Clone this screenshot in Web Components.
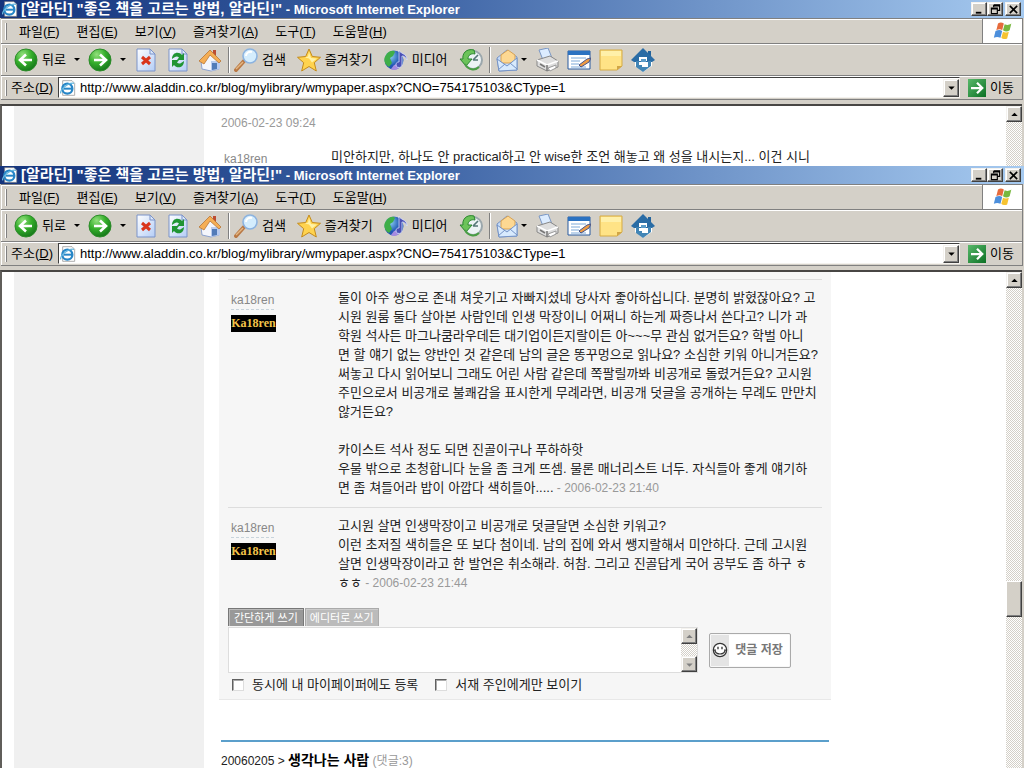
<!DOCTYPE html>
<html lang="ko">
<head>
<meta charset="utf-8">
<title>[알라딘] "좋은 책을 고르는 방법, 알라딘!"</title>
<style>
  body {
    margin: 0;
    height: 100vh;
    display: flex;
    flex-direction: column;
    overflow: hidden;
    background: #d4d0c8;
    color: #222;
    font: 13px/19px "Liberation Sans", "Noto Sans CJK KR", sans-serif;
  }
  ie-window.back { flex: none; --pane-height: 60px; }
  ie-window.front { flex: 1; min-height: 0; }
  .date { display: block; color: #999; font-size: 12px; padding: 8px 2px 5px; }
  .plain { margin-left: 2px; }
  .card {
    background: #f6f6f6;
    border-bottom: 1px solid #e8e8e8;
    padding: 7px 9px 5px;
  }
  .next {
    margin: 40px 2px 0;
    border-top: 2px solid #5b9fcb;
    padding-top: 11px;
    font-size: 12px;
    line-height: 14px;
    white-space: nowrap;
  }
  .next a { color: #000; font-size: 14px; font-weight: bold; text-decoration: none; }
  .next small { color: #999; font-size: 12px; }
</style>
</head>
<body>
  <ie-window class="back">
    <span class="date">2006-02-23 09:24</span>
    <blog-comment class="plain" author="ka18ren" brief>미안하지만, 하나도 안 practical하고 안 wise한 조언 해놓고 왜 성을 내시는지... 이건 시니</blog-comment>
  </ie-window>

  <ie-window class="front" thumb>
    <div class="card">
      <blog-comment author="ka18ren" date="2006-02-23 21:40">둘이 아주 쌍으로 존내 쳐웃기고 자빠지셨네 당사자 좋아하십니다. 분명히 밝혔잖아요? 고<br>시원 원룸 둘다 살아본 사람인데 인생 막장이니 어쩌니 하는게 짜증나서 쓴다고? 니가 과<br>학원 석사든 마그나쿰라우데든 대기업이든지랄이든 아~~~무 관심 없거든요? 학벌 아니<br>면 할 얘기 없는 양반인 것 같은데 남의 글은 똥꾸멍으로 읽나요? 소심한 키워 아니거든요?<br>써놓고 다시 읽어보니 그래도 어린 사람 같은데 쪽팔릴까봐 비공개로 돌렸거든요? 고시원<br>주민으로서 비공개로 불쾌감을 표시한게 무례라면, 비공개 덧글을 공개하는 무례도 만만치<br>않거든요?<br><br>카이스트 석사 정도 되면 진골이구나 푸하하핫<br>우물 밖으로 초청합니다 눈을 좀 크게 뜨셈. 물론 매너리스트 너두. 자식들아 좋게 얘기하<br>면 좀 쳐들어라 밥이 아깝다 색히들아.....</blog-comment>
      <blog-comment author="ka18ren" date="2006-02-23 21:44">고시원 살면 인생막장이고 비공개로 덧글달면 소심한 키워고?<br>이런 초저질 색히들은 또 보다 첨이네. 남의 집에 와서 쌩지랄해서 미안하다. 근데 고시원<br>살면 인생막장이라고 한 발언은 취소해라. 허참. 그리고 진골답게 국어 공부도 좀 하구 ㅎ<br>ㅎㅎ</blog-comment>
      <comment-form></comment-form>
    </div>
    <div class="next">20060205 &gt; <a href="#">생각나는 사람</a> <small>(댓글:3)</small></div>
  </ie-window>

<script>
const define = (name, html, init) => {
  const template = document.createElement("template");
  template.innerHTML = html;
  customElements.define(name, class extends HTMLElement {
    constructor() {
      super();
      this.attachShadow({ mode: "open" });
      this.shadowRoot.appendChild(template.content.cloneNode(true));
    }
    connectedCallback() {
      if (init) init(this, this.shadowRoot);
    }
  });
};

// all icons share a 24x24 box
const sheet = `<defs>
  <linearGradient id="p" x2="1" y2="1"><stop stop-color="#fff"/><stop offset="1" stop-color="#b4cdf6"/></linearGradient></defs>
  <path d="M3 1h13l5 5v17H3z" fill="url(#p)" stroke="#7b93c9"/><path d="M16 1v5h5z" fill="#dce8fb" stroke="#7b93c9"/>`;
const green = `<defs><radialGradient id="g" cx=".35" cy=".25" r=".8"><stop stop-color="#92e07c"/>
  <stop offset=".5" stop-color="#35ae2b"/><stop offset="1" stop-color="#14751a"/></radialGradient></defs>
  <circle cx="12" cy="12" r="11" fill="url(#g)" stroke="#2d8c2a"/>`;
const icons = {
  back: green + `<path d="M18 12H7M12 6.500l-6 5.500 6 5.500" fill="none" stroke="#fff" stroke-width="2.600"/>`,
  forward: green + `<path d="M6 12h11M12 6.500l6 5.500-6 5.500" fill="none" stroke="#fff" stroke-width="2.600"/>`,
  stop: sheet + `<path d="M8 9l8 7M16 9l-8 7" stroke="#d9351c" stroke-width="3"/>`,
  refresh: sheet + `<path d="M6 11c0-7 7-8 10-4l2-2v7h-7l2-2.500c-2-2-4-1-7 1.500zM18 13c0 7-7 8-10 4l-2 2v-7h7l-2 2.500c2 2 4 1 7-1.500z" fill="#209534"/>`,
  home: `<path d="M15 2h3v6h-3z" fill="#bd4c32"/><path d="M3 13l9-9 9 9v8l-8 2-9-2z" fill="#f4f6fc" stroke="#8da3cf"/>
    <path d="M13 13l9 0v8l-9 2z" fill="#b9cbee"/><path d="M14 15h5v6l-5 1z" fill="#527bb8"/>
    <path d="M1 13L12 2l11 11-2 2-9-8-6 9z" fill="#f5ae55" stroke="#b77637" stroke-width=".8"/>`,
  search: `<path d="M10 13l-8 9" stroke="#b97844" stroke-width="4" stroke-linecap="round"/><path d="M9 14l-7 7" stroke="#e4b784" stroke-width="1.500"/>
    <circle cx="16" cy="8" r="7" fill="#d4edfd" stroke="#8cb3df" stroke-width="1.600"/><path d="M12 8c0-3 3-5 6-4" fill="none" stroke="#fff" stroke-width="2"/>`,
  star: `<path d="M12 1l3.300 7.500 8.200.8-6.200 5.400 2 8.300-7.300-4.500L4.700 23l2-8.300L.5 9.300l8.200-.8z" fill="#ffd34e" stroke="#c48b1c"/>
    <path d="M12 4l2 6 6 .6-5 4-3-4-4-1 3-1z" fill="#fff2a6"/>`,
  media: `<defs><radialGradient id="m" cx=".3" cy=".3"><stop stop-color="#8fd6f5"/><stop offset="1" stop-color="#2056b3"/></radialGradient></defs>
    <circle cx="10" cy="12" r="9.500" fill="url(#m)"/><path d="M2 7c3-5 8-5 9-3l-2 4-3 2 2 5-3 4C0 16-1 11 2 7z" fill="#3fae48"/>
    <path d="M10 17c3-2 6 0 6 1-1 4-7 5-9 3z" fill="#a58be0"/>
    <path d="M15 2c1 4 8 3 8 10-2-4-4-4-5-4v8c0 5-6 4-6 1s2-3 3-3z" fill="#4a50b5" stroke="#dbe3ff" stroke-width=".8"/>`,
  history: `<circle cx="14" cy="12" r="9" fill="#edf3f5" stroke="#9ba7ac" stroke-width="2"/><path d="M14 12l5-5M14 12h5" stroke="#577" stroke-width="1.600"/>
    <path d="M15 2C7 0 3 6 4 11H1l6 7 6-7H9c0-4 3-6 7-5z" fill="#6cc35a" stroke="#2b8530"/><path d="M6 16c3 6 10 7 14 3" fill="none" stroke="#4a9e45" stroke-width="2"/>`,
  mail: `<path d="M2 10l10-8 10 7v13L4 23z" fill="#c5dcf8" stroke="#7593c6"/><path d="M6 7l7-5 7 5v8H6z" fill="#fdd892" stroke="#d9a354"/>
    <path d="M2 11l10 7 10-8v12L4 23z" fill="#d8eafd" stroke="#7593c6"/><path d="M3 22l7-6M22 21l-7-6" stroke="#7593c6"/>`,
  print: `<path d="M4 2l9-2 4 10-9 2z" fill="#dcecff" stroke="#7a97c5"/><path d="M2 12l13-4 8 5v6l-11 4-10-5z" fill="#dedede" stroke="#888"/>
    <path d="M2 12l10 5 11-4" fill="none" stroke="#fff" stroke-width="1.500"/><path d="M12 17v6M5 16l5 3" stroke="#777" stroke-width="1.500"/><path d="M13 20l8-3v3l-6 3z" fill="#fff" stroke="#999"/>`,
  edit: `<path d="M1 3h22v18H1z" fill="#fff" stroke="#285b9f"/><path d="M1 3h22v4H1z" fill="#2b72c1"/>
    <path d="M4 10h15M4 13h9M4 16h8M4 19h15" stroke="#7ca9d8"/><path d="M12 17l8-6 4-1-2 4-8 5z" fill="#ee9b43" stroke="#46548a"/>`,
  note: `<path d="M1 2h22v16l-5 4H1z" fill="#ffe386" stroke="#d4aa44"/><path d="M18 22v-4h5z" fill="#d1a545"/><path d="M2 3h20v5H2z" fill="#fff0a9"/>`,
  house: `<path d="M4 11v7l8 6 9-6v-7z" fill="#fff"/><path d="M17 3h3v6h-3z" fill="#23639c"/><path d="M0 12L12 0l12 12-3 2H3z" fill="#2a6ca5"/>
    <path d="M8 9h8v4H8z" fill="#fff"/><path d="M5 13h3v4h3v2h6v-6h3v5l-8 6-7-5z" fill="#4285b5"/><path d="M10 11h5v3h-5z" fill="#5c9cc9"/>`,
  page: `<path d="M4 1h14l4 4v18H4z" fill="#fff" stroke="#888"/><circle cx="11" cy="13" r="7.500" fill="none" stroke="#2786c7" stroke-width="3.500"/>
    <path d="M6 13h12" stroke="#2786c7" stroke-width="3"/><path d="M1 20C0 15 12 3 21 5" fill="none" stroke="#65b7df" stroke-width="2"/>`,
  go: `<defs><linearGradient id="o" x2="1" y2="1"><stop stop-color="#59b96b"/><stop offset="1" stop-color="#0c7024"/></linearGradient></defs>
    <path d="M0 0h24v24H0z" fill="url(#o)"/><path d="M4 12h14M12 5l7 7-7 7" fill="none" stroke="#fff" stroke-width="3"/>`,
  flag: `<path d="M6 3c3-2 5-1 7 0l-2 8c-2-2-5-1-7 0z" fill="#e66b3c"/><path d="M14 4c3 1 5 1 8-1l-2 8c-3 2-5 2-8 0z" fill="#78b83e"/>
    <path d="M3 12c3-1 5-2 8 0l-2 8c-3-1-5-1-8 0z" fill="#4c8fdc"/><path d="M12 13c2 1 5 1 7 0l-2 8c-2 1-5 1-7-1z" fill="#f6c331"/>`,
  smile: `<circle cx="12" cy="12" r="10" fill="#fff" stroke="#333" stroke-width="1.800"/><path d="M9 7v4M15 7v4" stroke="#333" stroke-width="2"/>
    <path d="M4 12c2 8 14 8 16 0M3 12h3M18 12h3" fill="none" stroke="#333" stroke-width="1.600"/>`,
  min: `<path d="M4 17h12v4H4z"/>`,
  restore: `<path d="M8 2h13v12h-5M8 7V2M8 4h13" fill="none" stroke="#000" stroke-width="2.500"/><path d="M3 9h13v12H3zM3 11h13" fill="none" stroke="#000" stroke-width="2.500"/>`,
  close: `<path d="M4 4l16 16M20 4L4 20" stroke="#000" stroke-width="3.500"/>`,
  up: `<path d="M12 8l7 7H5z"/>`,
  down: `<path d="M12 17l7-7H5z"/>`,
};

define("x-icon", `
  <style>
    :host { display: block; flex: none; width: var(--size, 24px); height: var(--size, 24px); }
    svg { display: block; width: 100%; height: 100%; }
  </style>
  <svg viewBox="0 0 24 24" fill="currentColor" aria-hidden="true"></svg>
`, (el, root) => {
  root.querySelector("svg").innerHTML = icons[el.getAttribute("name")];
});

const addIcon = (button, name) => {
  const icon = document.createElement("x-icon");
  icon.setAttribute("name", name);
  button.prepend(icon);
};

// raised grey button with a small glyph
define("bevel-button", `
  <style>
    :host { display: block; flex: none; width: 16px; height: 16px; }
    button {
      box-sizing: border-box; width: 100%; height: 100%; padding: 0;
      display: grid; place-items: center;
      background: #d4d0c8; color: inherit;
      border: 1px solid; border-color: #f4f2ee #404040 #404040 #f4f2ee;
      box-shadow: inset -1px -1px #808080, inset 1px 1px #fff;
    }
    x-icon { --size: 11px; }
  </style>
  <button type="button"></button>
`, (el, root) => {
  addIcon(root.querySelector("button"), el.getAttribute("icon"));
  root.querySelector("button").setAttribute("aria-label", el.getAttribute("icon"));
});

define("scroll-bar", `
  <style>
    :host {
      display: flex; flex-direction: column; flex: none; width: 16px; color: #000;
      background: repeating-conic-gradient(#fff 0 25%, #d4d0c8 0 50%) 0 0 / 2px 2px;
    }
    .before { flex: 66; }
    .after { flex: 34; }
    .thumb {
      display: none; height: 34px; background: #d4d0c8;
      border: 1px solid; border-color: #fff #404040 #404040 #fff;
      box-shadow: inset -1px -1px #808080;
    }
    :host([thumb]) .thumb { display: block; }
    .end { display: none; }
    :host([small]) { color: #808080; }
    :host([small]) .end { display: block; }
  </style>
  <bevel-button icon="up"></bevel-button>
  <div class="before"></div>
  <div class="thumb"></div>
  <div class="after"></div>
  <bevel-button class="end" icon="down"></bevel-button>
`);

define("tool-button", `
  <style>
    :host { display: block; flex: none; }
    button {
      display: flex; align-items: center; padding: 0;
      border: 0; background: none; color: #000; font: inherit; white-space: nowrap;
    }
    button.labelled { gap: 4px; }
    slot { display: block; }
  </style>
  <button type="button"><slot></slot></button>
`, (el, root) => {
  const button = root.querySelector("button");
  addIcon(button, el.getAttribute("icon"));
  button.classList.toggle("labelled", !!el.textContent);
  button.setAttribute("aria-label", el.textContent || el.getAttribute("icon"));
});

define("ie-window", `
  <style>
    :host { display: flex; flex-direction: column; overflow: hidden; background: #d4d0c8; color: #000; }
    header {
      display: flex; align-items: center; flex: none; height: 18px; padding: 0 3px 0 2px;
      background: linear-gradient(90deg, #14347c, #3c62a4 40%, #a6caf0);
      color: #fff; font-weight: bold; line-height: 18px; white-space: nowrap;
    }
    header x-icon { --size: 16px; margin-right: 3px; }
    header .ko { font-size: 15px; }
    header h1 { flex: 1; margin: 0; font-size: 13px; line-height: 18px; }
    header bevel-button { height: 14px; color: #000; }
    header bevel-button:last-child { margin-left: 2px; }
    .bar {
      display: flex; align-items: center; flex: none; box-sizing: border-box;
      margin: 0 1px; padding-left: 4px; color: #000; white-space: nowrap;
      border-top: 1px solid #808080; border-right: 1px solid #808080;
      box-shadow: inset 0 1px #fff, inset 1px 0 #fff;
    }
    .bar::before {
      content: ""; align-self: stretch; flex: none; width: 1px; margin: 4px 0 3px;
      border-right: 1px solid #808080; background: #fff;
    }
    .menu { height: 25px; gap: 17px; }
    .menu::before { margin-right: -5px; }
    .menu a { color: inherit; text-decoration: none; }
    .menu .logo {
      margin-left: auto; align-self: stretch; width: 39px; display: grid; place-items: center;
      border-left: 1px solid #808080; background: #fff;
    }
    .logo x-icon { --size: 20px; }
    .tools { height: 32px; }
    .group { display: flex; align-items: center; gap: 8px; }
    .tools::before { margin-right: 7px; }
    .wide { gap: 11px; }
    .caret { width: 0; border: 3px solid transparent; border-top-color: #000; border-bottom: 0; }
    .tools hr { width: 1px; height: 26px; margin: 0 4px 0 6px; border: 0; border-left: 1px solid #808080; background: #fff; }
    .mail { display: flex; align-items: center; gap: 2px; }
    .address { height: 25px; border-bottom: 1px solid #808080; }
    .address label { margin: 0 5px 0 4px; }
    .field {
      display: flex; align-items: center; flex: 1; box-sizing: border-box; height: 21px; padding-left: 1px;
      background: #fff; border: 1px solid; border-color: #404040 #f4f2ee #f4f2ee #404040;
    }
    .field x-icon { --size: 16px; }
    .field input { flex: 1; min-width: 0; padding: 0 4px; border: 0; background: none; color: #000; font: inherit; outline: 0; }
    .field bevel-button { height: 18px; }
    .address tool-button { --size: 18px; margin: 0 8px; }
    .pane {
      display: flex; flex: 1; min-height: 0; margin: 4px 2px 0 0;
      height: var(--pane-height, auto);
      border-top: 2px solid #484644; border-left: 2px solid #605e5a;
      background: #fff; color: #222; overflow: hidden;
    }
    :host(.back) .pane { flex: none; }
    aside { flex: none; width: 190px; margin: 0 15px 0 12px; background: #f0f0f0; }
    main { flex: 1; }
    .inner { width: 612px; }
  </style>
  <header>
    <x-icon name="page"></x-icon>
    <h1><span class="ko">[알라딘] "좋은 책을 고르는 방법, 알라딘!"</span> - Microsoft Internet Explorer</h1>
    <bevel-button icon="min"></bevel-button>
    <bevel-button icon="restore"></bevel-button>
    <bevel-button icon="close"></bevel-button>
  </header>
  <nav class="bar menu">
    <a href="#">파일(<u>F</u>)</a><a href="#">편집(<u>E</u>)</a><a href="#">보기(<u>V</u>)</a>
    <a href="#">즐겨찾기(<u>A</u>)</a><a href="#">도구(<u>T</u>)</a><a href="#">도움말(<u>H</u>)</a>
    <div class="logo"><x-icon name="flag"></x-icon></div>
  </nav>
  <div class="bar tools">
    <div class="group">
      <tool-button icon="back">뒤로</tool-button>
      <i class="caret"></i>
      <tool-button icon="forward"></tool-button>
      <i class="caret"></i>
      <tool-button icon="stop"></tool-button>
      <tool-button icon="refresh"></tool-button>
      <tool-button icon="home"></tool-button>
    </div>
    <hr>
    <div class="group wide">
      <tool-button icon="search">검색</tool-button>
      <tool-button icon="star">즐겨찾기</tool-button>
      <tool-button icon="media">미디어</tool-button>
      <tool-button icon="history"></tool-button>
    </div>
    <hr>
    <div class="group">
      <div class="mail"><tool-button icon="mail"></tool-button><i class="caret"></i></div>
      <tool-button icon="print"></tool-button>
      <tool-button icon="edit"></tool-button>
      <tool-button icon="note"></tool-button>
      <tool-button icon="house"></tool-button>
    </div>
  </div>
  <div class="bar address">
    <label for="url">주소(<u>D</u>)</label>
    <div class="field">
      <x-icon name="page"></x-icon>
      <input id="url" type="text" value="http://www.aladdin.co.kr/blog/mylibrary/wmypaper.aspx?CNO=754175103&amp;CType=1">
      <bevel-button icon="down"></bevel-button>
    </div>
    <tool-button icon="go">이동</tool-button>
  </div>
  <div class="pane">
    <aside></aside>
    <main><div class="inner"><slot></slot></div></main>
    <scroll-bar></scroll-bar>
  </div>
`, (el, root) => {
  root.querySelector("scroll-bar").toggleAttribute("thumb", el.hasAttribute("thumb"));
});

define("blog-comment", `
  <style>
    :host {
      display: grid; grid-template-columns: 107px 1fr; padding: 8px 0 9px 3px;
      border-top: 1px solid #ddd; white-space: nowrap;
    }
    :host([brief]) { border-top-color: transparent; }
    .who { padding-top: 3px; }
    .who a {
      display: table; color: #888; font-size: 12px; line-height: 18px;
      text-decoration: none; border-bottom: 1px dashed #c8d4dc;
    }
    .badge {
      width: 45px; height: 17px; margin-top: 5px; background: #000; color: #f3c44a;
      font: bold 12px/17px "Liberation Serif", serif; text-align: center;
    }
    time { color: #999; font-size: 12px; }
  </style>
  <div class="who"><a href="#"></a></div>
  <div><slot></slot><time></time></div>
`, (el, root) => {
  root.querySelector("a").textContent = el.getAttribute("author");
  if (el.hasAttribute("brief")) return;

  const badge = document.createElement("div");
  badge.className = "badge";
  badge.textContent = "Ka18ren";
  root.querySelector(".who").appendChild(badge);
  root.querySelector("time").textContent = " - " + el.getAttribute("date");
});

define("comment-form", `
  <style>
    :host { display: block; margin-top: 6px; }
    .tabs { display: flex; gap: 1px; }
    .tabs button {
      height: 18px; padding: 0 5px; border: 1px solid #777; border-bottom: 0;
      background: #999; box-shadow: inset 1px 1px #bbb; color: #fff;
      font: inherit; font-size: 11px; line-height: 16px;
    }
    .tabs button + button { padding: 0 4px; background: #bbb; border-color: #aaa; box-shadow: inset 1px 1px #ccc; }
    .write { display: flex; align-items: center; gap: 11px; margin-top: 1px; }
    .box {
      display: flex; box-sizing: border-box; width: 470px; height: 46px;
      background: #fff; border: 1px solid #ddd;
    }
    textarea { flex: 1; padding: 2px; border: 0; outline: 0; resize: none; overflow: hidden; font: inherit; background: none; }
    .save {
      display: flex; box-sizing: border-box; width: 82px; height: 35px; padding: 1px;
      border: 1px solid #aaa; border-radius: 2px; background: #f8f8f8; color: #777;
      font: inherit; font-size: 12px; font-weight: bold;
    }
    .face { display: grid; place-items: center; width: 18px; height: 31px; background: #e4e4e4; }
    .save x-icon { --size: 16px; }
    .save span { flex: 1; line-height: 31px; background: #fff; }
    .checks { display: flex; align-items: center; gap: 17px; padding: 2px 0 0 4px; }
    label { display: flex; align-items: center; gap: 8px; white-space: nowrap; }
    input {
      appearance: none; width: 12px; height: 12px; margin: 0; background: #fff;
      border: 1px solid; border-color: #606060 #ddd #ddd #606060; box-shadow: inset 1px 1px #aaa;
    }
  </style>
  <form>
    <div class="tabs"><button type="button">간단하게 쓰기</button><button type="button">에디터로 쓰기</button></div>
    <div class="write">
      <div class="box"><textarea aria-label="댓글"></textarea><scroll-bar small></scroll-bar></div>
      <button class="save" type="button"><div class="face"><x-icon name="smile"></x-icon></div><span>댓글 저장</span></button>
    </div>
    <div class="checks">
      <label><input type="checkbox">동시에 내 마이페이퍼에도 등록</label>
      <label><input type="checkbox">서재 주인에게만 보이기</label>
    </div>
  </form>
`);
</script>
</body>
</html>
